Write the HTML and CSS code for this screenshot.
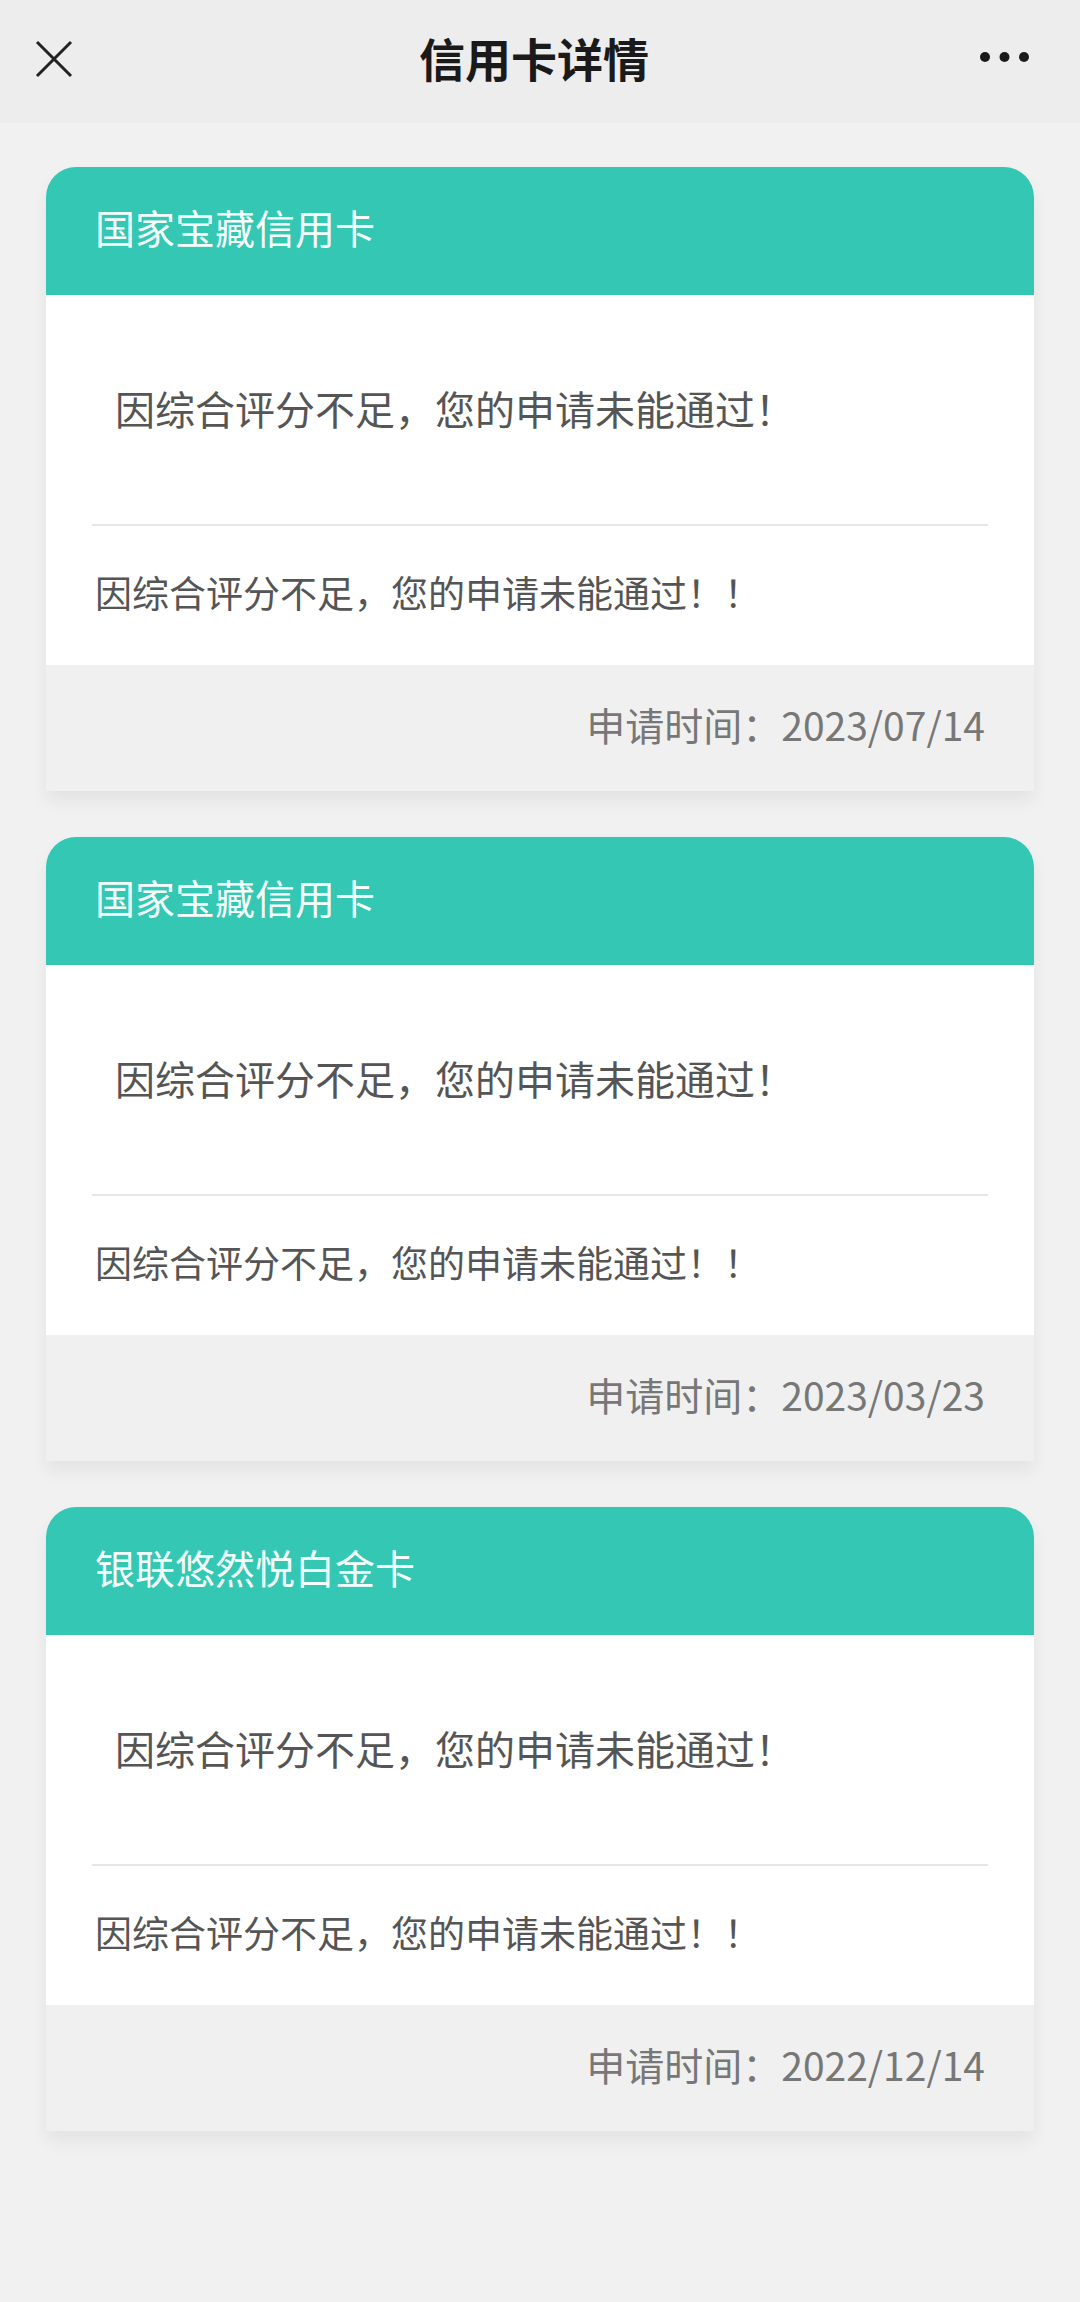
FILE: index.html
```html
<!DOCTYPE html>
<html lang="zh-CN">
<head>
<meta charset="utf-8">
<title>信用卡详情</title>
<link rel="stylesheet" href="styles.css">
</head>
<body>
<header class="navbar">
  <div class="nav-left">
    <svg class="icon-close" width="38" height="38" viewBox="0 0 38 38">
      <path d="M2 2 L36 36 M36 2 L2 36" stroke="#222" stroke-width="3" stroke-linecap="butt" fill="none"/>
    </svg>
  </div>
  <h1 class="nav-title">信用卡详情</h1>
  <div class="nav-right">
    <svg class="icon-more" width="50" height="12" viewBox="0 0 50 12">
      <circle cx="5" cy="6" r="5" fill="#1a1a1a"/>
      <circle cx="24.5" cy="6" r="5" fill="#1a1a1a"/>
      <circle cx="44" cy="6" r="5" fill="#1a1a1a"/>
    </svg>
  </div>
</header>

<main class="list">
  <section class="card">
    <div class="card-head">国家宝藏信用卡</div>
    <div class="card-msg">因综合评分不足，您的申请未能通过！</div>
    <div class="divider"></div>
    <div class="card-note">因综合评分不足，您的申请未能通过！！</div>
    <div class="card-foot">申请时间：2023/07/14</div>
  </section>

  <section class="card">
    <div class="card-head">国家宝藏信用卡</div>
    <div class="card-msg">因综合评分不足，您的申请未能通过！</div>
    <div class="divider"></div>
    <div class="card-note">因综合评分不足，您的申请未能通过！！</div>
    <div class="card-foot">申请时间：2023/03/23</div>
  </section>

  <section class="card">
    <div class="card-head">银联悠然悦白金卡</div>
    <div class="card-msg">因综合评分不足，您的申请未能通过！</div>
    <div class="divider"></div>
    <div class="card-note">因综合评分不足，您的申请未能通过！！</div>
    <div class="card-foot">申请时间：2022/12/14</div>
  </section>
</main>
</body>
</html>
```

FILE: styles.css
```css
* {
  box-sizing: border-box;
}

html, body {
  margin: 0;
  padding: 0;
}

body {
  background: #f1f1f1;
  font-family: "Noto Sans CJK SC", "Noto Sans", sans-serif;
  min-height: 2302px;
}

.navbar {
  height: 123px;
  background: #ededed;
  display: grid;
  grid-template-columns: 1fr auto 1fr;
  align-items: center;
  padding-bottom: 10px;
}

.nav-left {
  padding-left: 35px;
  display: flex;
  align-items: center;
  padding-top: 4px;
}

.icon-close {
  display: block;
}

.nav-title {
  margin: 0 12px 0 0;
  font-size: 46px;
  line-height: 1;
  font-weight: 700;
  color: #1a1a1a;
}

.nav-right {
  justify-self: end;
  padding-right: 50px;
  display: flex;
  align-items: center;
}

.icon-more {
  display: block;
}

.list {
  display: flex;
  flex-direction: column;
  gap: 46px;
  padding: 44px 46px 0;
}

.card {
  background: #fff;
  border-radius: 30px 30px 0 0;
  overflow: hidden;
  box-shadow: 0 10px 18px rgba(0, 0, 0, 0.06);
}

.card-head {
  height: 128px;
  background: #33c7b4;
  color: #f4fffc;
  font-size: 40px;
  line-height: 1;
  display: flex;
  align-items: center;
  padding-left: 49px;
  padding-bottom: 8px;
}

.card-msg {
  height: 229px;
  display: flex;
  align-items: center;
  padding-left: 69px;
  padding-bottom: 4px;
  font-size: 40px;
  line-height: 1;
  color: #555;
}

.divider {
  height: 2px;
  margin: 0 46px;
  background: #e6e6e6;
}

.card-note {
  height: 139px;
  display: flex;
  align-items: center;
  padding-left: 49px;
  padding-bottom: 6px;
  font-size: 37px;
  line-height: 1;
  color: #555;
}

.card-foot {
  height: 126px;
  background: #f0f0f0;
  display: flex;
  align-items: center;
  justify-content: flex-end;
  padding-right: 49px;
  padding-bottom: 8px;
  font-size: 39px;
  line-height: 1;
  color: #777;
}
```
